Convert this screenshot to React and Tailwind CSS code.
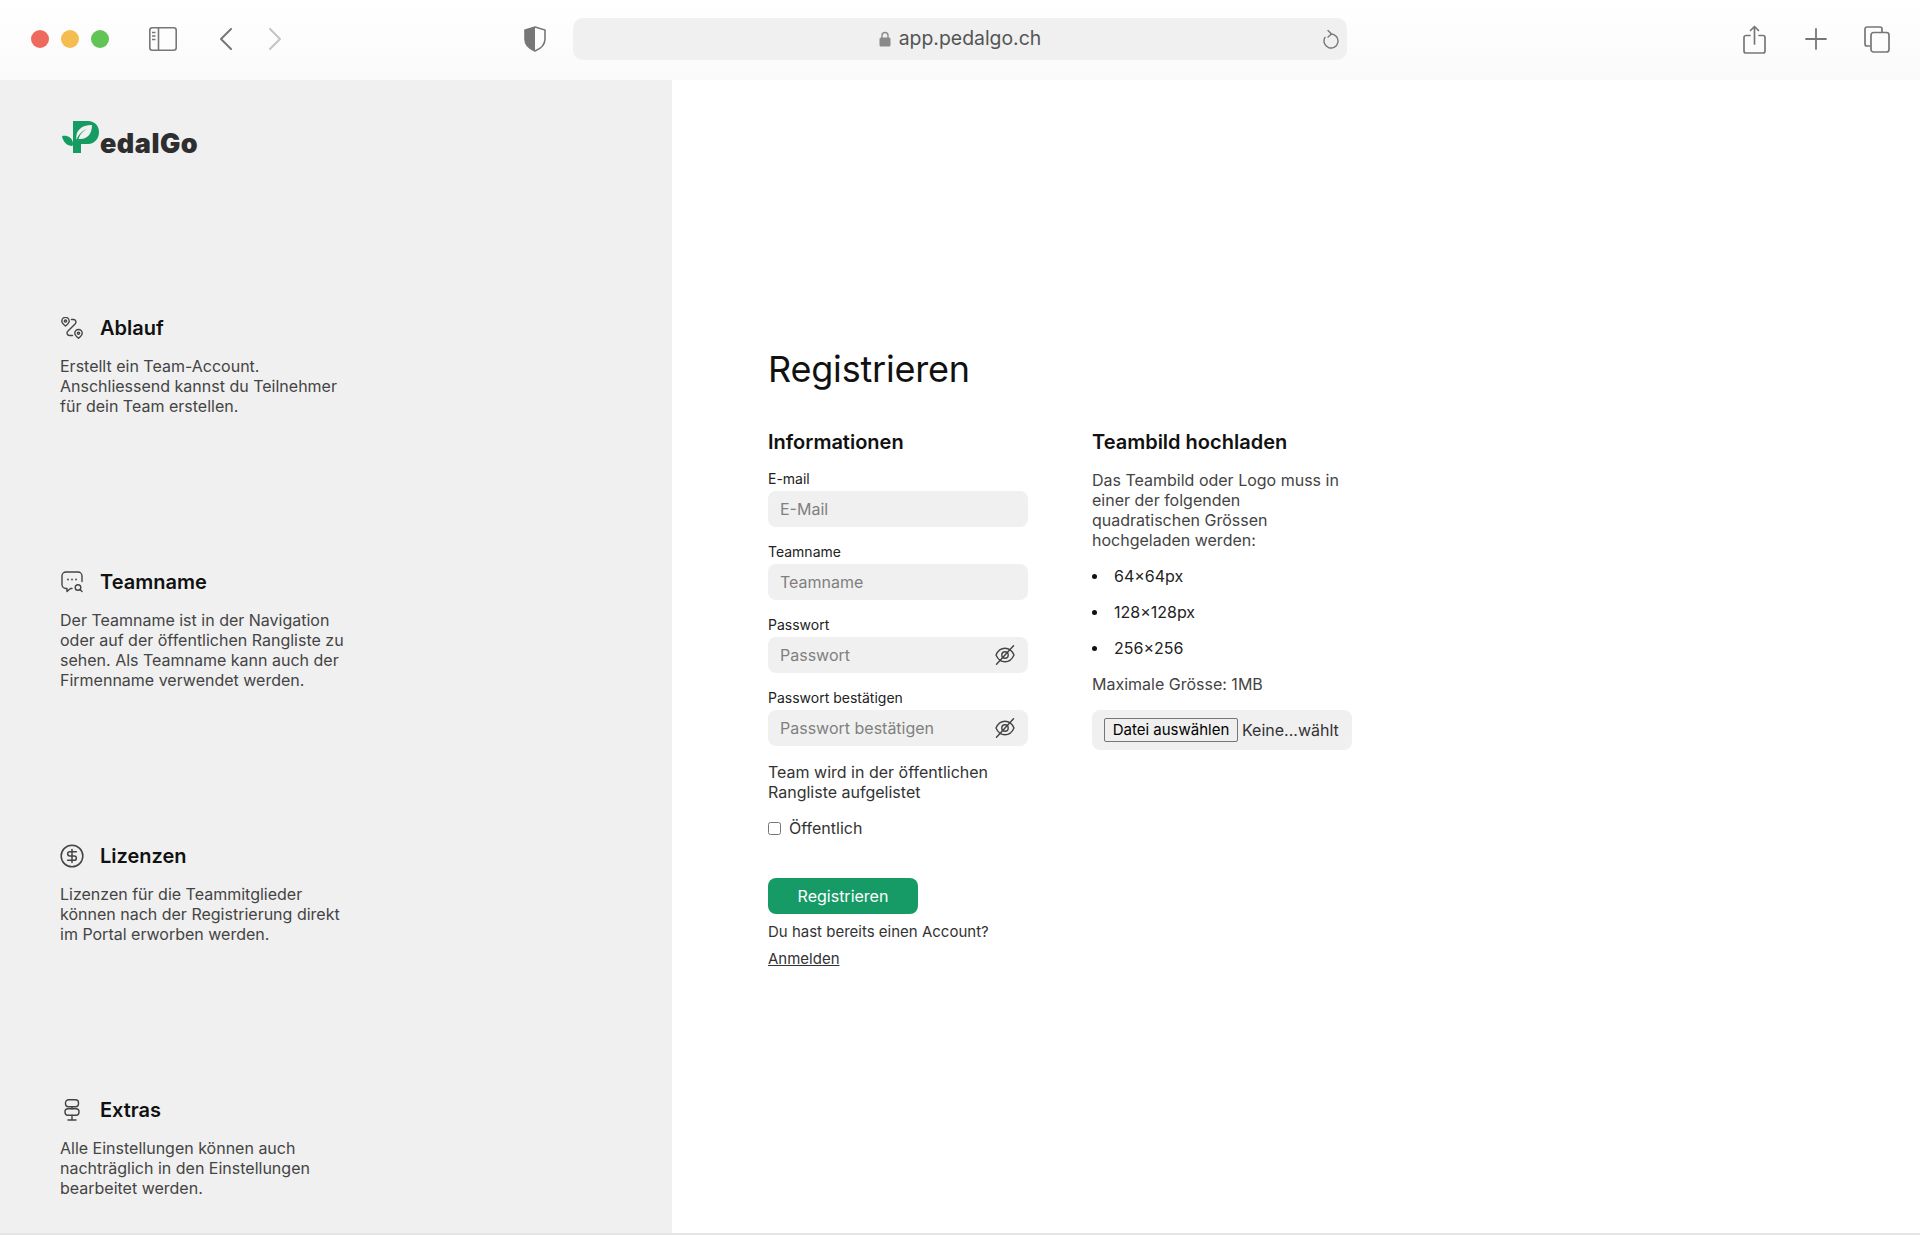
import { CircleDollarSign } from "lucide-react";

const inter = "font-['Inter',sans-serif]";

// browser chrome icons
function SidebarIcon() {
  return (
    <svg width="28" height="24" viewBox="0 0 28 24" fill="none" stroke="#777" strokeWidth="1.6">
      <rect x="0.8" y="0.8" width="26.4" height="22.4" rx="2.5" />
      <path d="M9.5 1v22" />
      <path d="M3 5.5h3.5M3 9h3.5M3 12.5h3.5" strokeWidth="1.4" />
    </svg>
  );
}

function Shield() {
  return (
    <svg width="22" height="26" viewBox="0 0 22 26">
      <path d="M11 1 L21 4 V13 C21 19 16 23 11 25 C6 23 1 19 1 13 V4 Z" fill="none" stroke="#777" strokeWidth="1.6" />
      <path d="M11 1 L1 4 V13 C1 19 6 23 11 25 Z" fill="#777" />
    </svg>
  );
}

function Chevron({ dir, color }) {
  return (
    <svg width="12" height="22" viewBox="0 0 12 22" fill="none" stroke={color} strokeWidth="2" strokeLinecap="round" strokeLinejoin="round">
      {dir === "left" ? <path d="M11 1 L1 11 L11 21" /> : <path d="M1 1 L11 11 L1 21" />}
    </svg>
  );
}

function Reload() {
  return (
    <svg width="16" height="20" viewBox="0 0 16 20" fill="none" stroke="#777" strokeWidth="1.4" strokeLinecap="round" strokeLinejoin="round">
      <path d="M8 5 A7 7 0 1 1 2 8.4" />
      <path d="M5 1.5 L8.5 5 L5 8" />
    </svg>
  );
}

function Share() {
  return (
    <svg width="23" height="29" viewBox="0 0 23 29" fill="none" stroke="#777" strokeWidth="1.7" strokeLinecap="round" strokeLinejoin="round">
      <path d="M7 10.5 H3 a2 2 0 0 0 -2 2 V26 a2 2 0 0 0 2 2 H20 a2 2 0 0 0 2 -2 V12.5 a2 2 0 0 0 -2 -2 H16" />
      <path d="M11.5 19 V1.5 M7.5 5.5 L11.5 1.5 L15.5 5.5" />
    </svg>
  );
}

function Plus() {
  return (
    <svg width="22" height="22" viewBox="0 0 22 22" fill="none" stroke="#777" strokeWidth="1.8" strokeLinecap="round">
      <path d="M11 1 V21 M1 11 H21" />
    </svg>
  );
}

function Tabs() {
  return (
    <svg width="26" height="27" viewBox="0 0 26 27" fill="none" stroke="#777" strokeWidth="1.7">
      <path d="M6 20 H3 a2 2 0 0 1 -2 -2 V3 a2 2 0 0 1 2 -2 H16 a2 2 0 0 1 2 2 V6" />
      <rect x="7" y="6.5" width="18" height="19.5" rx="2.5" />
    </svg>
  );
}

function Lock() {
  return (
    <svg width="12" height="16" viewBox="0 0 12 16">
      <path d="M3 7 V4.5 a3 3 0 0 1 6 0 V7" fill="none" stroke="#8a8a8a" strokeWidth="1.4" />
      <rect x="0.5" y="6.5" width="11" height="9" rx="1.5" fill="#8a8a8a" />
    </svg>
  );
}

// logo: green P with leaf cut out, the rest is plain text
function LogoMark() {
  return (
    <svg width="38" height="33" viewBox="0 0 38 33" className="shrink-0">
      <path d="M11 0 H26 C33 0 37 5 37 11 C37 17 33 23 26 23 H19 V32 H11 V18 Z" fill="#169b62" />
      <path d="M14.5 19 C13 10 19 4 30 4 C30 13 25 19 16.5 18 C18 13 21 10 25 8 C20 10 16 14 14.5 19 Z" fill="#f0f0f0" />
      <path d="M0 15 C5 14 10 16 11 22 C11 23 11 24 10.5 25 C5 25 1 21 0 15 Z" fill="#169b62" />
    </svg>
  );
}

function RouteIcon() {
  return (
    <svg width="22" height="22" viewBox="0 0 22 22" fill="none" stroke="#444" strokeWidth="1.4" strokeLinecap="round" strokeLinejoin="round">
      <path d="M4.5 9 C2 7 0.8 5.5 0.8 4 a3.7 3.7 0 0 1 7.4 0 C8.2 5.5 7 7 4.5 9 Z" />
      <circle cx="4.5" cy="4" r="1.1" />
      <path d="M17.5 21.2 C15 19.2 13.8 17.7 13.8 16.2 a3.7 3.7 0 0 1 7.4 0 C21.2 17.7 20 19.2 17.5 21.2 Z" />
      <circle cx="17.5" cy="16.2" r="1.1" />
      <path d="M10.5 2.5 H12.5 a2.5 2.5 0 0 1 1.8 4.2 L7 14 a2.5 2.5 0 0 0 1.5 4.5 H11.5" />
    </svg>
  );
}

function ChatSearchIcon() {
  return (
    <svg width="22" height="22" viewBox="0 0 22 22" fill="none" stroke="#444" strokeWidth="1.4" strokeLinecap="round" strokeLinejoin="round">
      <path d="M11 17.5 H9.5 L6 20.5 V17.5 H5 a4 4 0 0 1 -4 -4 V5 a4 4 0 0 1 4 -4 H17 a4 4 0 0 1 4 4 V10.5" />
      <path d="M7 8.5 h.01 M11 8.5 h.01 M15 8.5 h.01" strokeWidth="1.8" />
      <circle cx="17" cy="16.5" r="2.8" />
      <path d="M19 18.5 L21 20.5" />
    </svg>
  );
}

function SignpostIcon() {
  return (
    <svg width="16" height="22" viewBox="0 0 16 22" fill="none" stroke="#444" strokeWidth="1.4" strokeLinecap="round" strokeLinejoin="round">
      <rect x="1.5" y="0.8" width="13" height="7" rx="3" />
      <rect x="1" y="9.8" width="14" height="6.4" rx="3" />
      <path d="M8 7.8 V9.8 M8 16.2 V21 M4 21 H12" />
    </svg>
  );
}

function EyeOff() {
  return (
    <svg width="20" height="20" viewBox="0 0 20 20" fill="none" stroke="#444" strokeWidth="1.4" strokeLinecap="round" strokeLinejoin="round">
      <path d="M1 10 C3 5.5 6.5 3.2 10 3.2 C13.5 3.2 17 5.5 19 10 C17 14.5 13.5 16.8 10 16.8 C6.5 16.8 3 14.5 1 10 Z" />
      <circle cx="10" cy="10" r="3.2" />
      <path d="M18.5 0.7 L1.5 19.3" />
    </svg>
  );
}

const features = [
  {
    title: "Ablauf",
    icon: <RouteIcon />,
    lines: ["Erstellt ein Team-Account.", "Anschliessend kannst du Teilnehmer", "für dein Team erstellen."],
  },
  {
    title: "Teamname",
    icon: <ChatSearchIcon />,
    lines: [
      "Der Teamname ist in der Navigation",
      "oder auf der öffentlichen Rangliste zu",
      "sehen. Als Teamname kann auch der",
      "Firmenname verwendet werden.",
    ],
  },
  {
    title: "Lizenzen",
    icon: <CircleDollarSign size={26} color="#444" strokeWidth={1.4} className="-ml-0.5" />,
    lines: ["Lizenzen für die Teammitglieder", "können nach der Registrierung direkt", "im Portal erworben werden."],
  },
  {
    title: "Extras",
    icon: <div className="ml-[3px] flex"><SignpostIcon /></div>,
    lines: ["Alle Einstellungen können auch", "nachträglich in den Einstellungen", "bearbeitet werden."],
  },
];

function Feature({ item }) {
  return (
    <div>
      <div className="flex items-center h-7">
        <div className="w-10 flex justify-start pl-px">{item.icon}</div>
        <h3 className="text-xl leading-7 font-semibold text-[#111]">{item.title}</h3>
      </div>
      <p className="mt-3.5 text-base leading-5 text-[#444]">
        {item.lines.map((l) => (
          <span key={l} className="block whitespace-nowrap">{l}</span>
        ))}
      </p>
    </div>
  );
}

function Field({ label, eye }) {
  return (
    <div>
      <label className="block text-sm leading-5 text-[#222]">{label}</label>
      <div className="relative mt-0.5">
        <input
          placeholder={label === "E-mail" ? "E-Mail" : label}
          className="w-full h-9 rounded-lg bg-[#f0f0f0] px-3 text-base placeholder:text-[#808080] outline-none"
        />
        {eye && (
          <div className="absolute right-[13px] top-2">
            <EyeOff />
          </div>
        )}
      </div>
    </div>
  );
}

export default function App() {
  return (
    <div className={`${inter} h-[1235px] flex flex-col bg-white overflow-hidden`}>
      {/* browser toolbar */}
      <div className="h-20 shrink-0 flex items-center bg-gradient-to-b from-white to-[#fafafa] relative">
        <div className="flex gap-3 ml-[31px] -mt-0.5">
          <span className="w-[18px] h-[18px] rounded-full bg-[#ee6a5f]" />
          <span className="w-[18px] h-[18px] rounded-full bg-[#f5bd4f]" />
          <span className="w-[18px] h-[18px] rounded-full bg-[#61c454]" />
        </div>
        <div className="ml-[40px] -mt-0.5 flex"><SidebarIcon /></div>
        <div className="ml-[43px] -mt-0.5 flex"><Chevron dir="left" color="#777" /></div>
        <div className="ml-[37px] -mt-0.5 flex"><Chevron dir="right" color="#c4c4c4" /></div>
        <div className="ml-[243px] -mt-0.5 flex"><Shield /></div>
        <div className="ml-[27px] -mt-0.5 w-[774px] h-[42px] rounded-[10px] bg-[#f0f0f0] flex items-center relative">
          <div className="mx-auto flex items-center gap-2">
            <Lock />
            <span className="text-[19.4px] text-[#555]">app.pedalgo.ch</span>
          </div>
          <div className="absolute right-2 top-[11px] flex"><Reload /></div>
        </div>
        <div className="ml-auto flex items-center mr-[30px] -mt-0.5">
          <Share />
          <div className="ml-[39px] flex"><Plus /></div>
          <div className="ml-[37px] flex"><Tabs /></div>
        </div>
      </div>

      <div className="flex flex-1 min-h-0">
        {/* left info panel */}
        <aside className="w-[672px] shrink-0 bg-[#f0f0f0] pl-[60px] pt-[41px]">
          <div className="flex items-end h-[33px] ml-0.5">
            <LogoMark />
            <span className="font-black text-[27px] leading-[30px] tracking-[0.5px] text-[#2e2e2e] -mb-[5px]">
              edalGo
            </span>
          </div>
          <div className="mt-[160px] flex flex-col gap-[152px]">
            {features.map((f) => (
              <Feature key={f.title} item={f} />
            ))}
          </div>
        </aside>

        {/* register form */}
        <main className="flex-1 pl-24 pt-[269px]">
          <h1 className="text-4xl leading-10 tracking-[-0.2px] text-[#111]">Registrieren</h1>
          <div className="mt-[39px] flex gap-16">
            <div className="w-[260px]">
              <h2 className="text-xl leading-7 font-semibold text-[#111]">Informationen</h2>
              <div className="mt-[13px] flex flex-col gap-[15px]">
                <Field label="E-mail" />
                <Field label="Teamname" />
                <Field label="Passwort" eye />
                <Field label="Passwort bestätigen" eye />
              </div>
              <p className="mt-4 text-base leading-5 text-[#333]">
                Team wird in der öffentlichen
                <br />
                Rangliste aufgelistet
              </p>
              <label className="mt-3.5 flex items-center h-6 text-base text-[#333]">
                <input type="checkbox" className="w-[13px] h-[13px] m-0" />
                <span className="ml-2">Öffentlich</span>
              </label>
              <button className="mt-[38px] block w-[150px] h-9 rounded-lg bg-[#169b66] text-base text-white">
                Registrieren
              </button>
              <p className="mt-2 text-[15px] leading-5 text-[#333]">Du hast bereits einen Account?</p>
              <a href="#" className="mt-[7px] block text-[15px] leading-5 text-[#333] underline">
                Anmelden
              </a>
            </div>

            <div className="w-[260px]">
              <h2 className="text-xl leading-7 font-semibold text-[#111]">Teambild hochladen</h2>
              <p className="mt-3.5 text-base leading-5 text-[#444]">
                Das Teambild oder Logo muss in
                <br />
                einer der folgenden
                <br />
                quadratischen Grössen
                <br />
                hochgeladen werden:
              </p>
              <ul className="mt-4 flex flex-col gap-4 text-base leading-5 text-[#222]">
                {["64×64px", "128×128px", "256×256"].map((size) => (
                  <li key={size} className="flex items-center gap-[17px]">
                    <span className="w-[5px] h-[5px] rounded-full bg-[#111]" />
                    {size}
                  </li>
                ))}
              </ul>
              <p className="mt-4 text-base leading-5 text-[#444]">Maximale Grösse: 1MB</p>
              <div className="mt-4 h-10 rounded-lg bg-[#f0f0f0] flex items-center pl-3 text-base text-[#333]">
                <button className="h-6 w-[134px] border border-[#767676] rounded-[2px] bg-[#efefef] text-[15px] text-black">
                  Datei auswählen
                </button>
                <span className="ml-1">Keine...wählt</span>
              </div>
            </div>
          </div>
        </main>
      </div>
      <div className="h-0.5 shrink-0 bg-[#e5e5e5]" />
    </div>
  );
}
